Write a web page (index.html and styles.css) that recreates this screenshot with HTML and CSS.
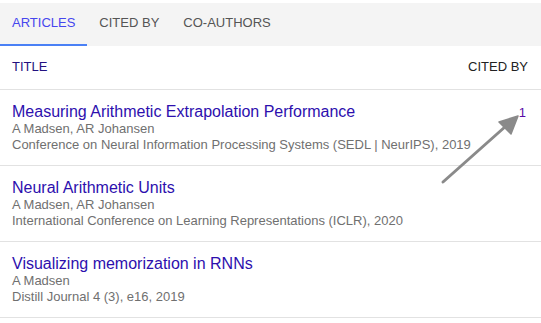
FILE: index.html
```html
<!DOCTYPE html>
<html lang="en">
<head>
  <meta charset="UTF-8">
  <title>Articles</title>
  <link rel="stylesheet" href="styles.css">
</head>
<body>
  <div class="page">
    <nav class="tabs">
      <a class="tab active">ARTICLES</a>
      <a class="tab">CITED BY</a>
      <a class="tab">CO-AUTHORS</a>
    </nav>

    <div class="list">
      <div class="row head">
        <div class="col-title"><a class="sort">TITLE</a></div>
        <div class="col-cited">CITED BY</div>
      </div>

      <div class="row item">
        <div class="col-title">
          <a class="title">Measuring Arithmetic Extrapolation Performance</a>
          <div class="meta">A Madsen, AR Johansen</div>
          <div class="meta">Conference on Neural Information Processing Systems (SEDL | NeurIPS), 2019</div>
        </div>
        <div class="col-cited"><a class="count">1</a></div>
      </div>

      <div class="row item">
        <div class="col-title">
          <a class="title">Neural Arithmetic Units</a>
          <div class="meta">A Madsen, AR Johansen</div>
          <div class="meta">International Conference on Learning Representations (ICLR), 2020</div>
        </div>
        <div class="col-cited"></div>
      </div>

      <div class="row item">
        <div class="col-title">
          <a class="title">Visualizing memorization in RNNs</a>
          <div class="meta">A Madsen</div>
          <div class="meta">Distill Journal 4 (3), e16, 2019</div>
        </div>
        <div class="col-cited"></div>
      </div>
    </div>

    <!-- annotation arrow pointing at the citation count -->
    <svg class="arrow" width="541" height="323" viewBox="0 0 541 323">
      <line x1="443" y1="182" x2="506" y2="126" stroke="#8a8a8a" stroke-width="3" stroke-linecap="round"/>
      <polygon points="518,116 499,122 511,134" fill="#8a8a8a" stroke="#8a8a8a" stroke-width="1.5" stroke-linejoin="round"/>
    </svg>
  </div>
</body>
</html>
```

FILE: styles.css
```css
body {
  margin: 0;
  background: #fff;
  font-family: "Liberation Sans", Arial, sans-serif;
}

.page {
  position: relative;
  width: 541px;
  padding-top: 3px;
}

.tabs {
  display: flex;
  background: #f4f4f4;
}

.tab {
  padding: 12px 12px 13px;
  font-size: 13px;
  line-height: 16px;
  color: #555;
  border-bottom: 2px solid transparent;
  cursor: pointer;
}

.tab.active {
  color: #4646ee;
  border-bottom-color: #4a80f5;
}

.row {
  display: flex;
  border-bottom: 1px solid #e2e2e2;
}

.col-title {
  flex: 1;
  padding-left: 12px;
}

.col-cited {
  padding-right: 15px;
  text-align: right;
  font-size: 13px;
}

.head {
  padding: 13px 0 14px;
  font-size: 13px;
  line-height: 16px;
}

.head .sort {
  color: #231080;
}

.head .col-cited {
  padding-right: 13px;
  color: #222;
}

.item {
  padding: 12px 0;
}

.title {
  display: block;
  font-size: 16px;
  line-height: 19px;
  color: #2d0fae;
}

.meta {
  font-size: 13px;
  line-height: 16px;
  color: #707070;
}

.count {
  display: block;
  line-height: 19px;
  padding-top: 1px;
  color: #5a0aa6;
}

.arrow {
  position: absolute;
  left: 0;
  top: 0;
  pointer-events: none;
}
```
